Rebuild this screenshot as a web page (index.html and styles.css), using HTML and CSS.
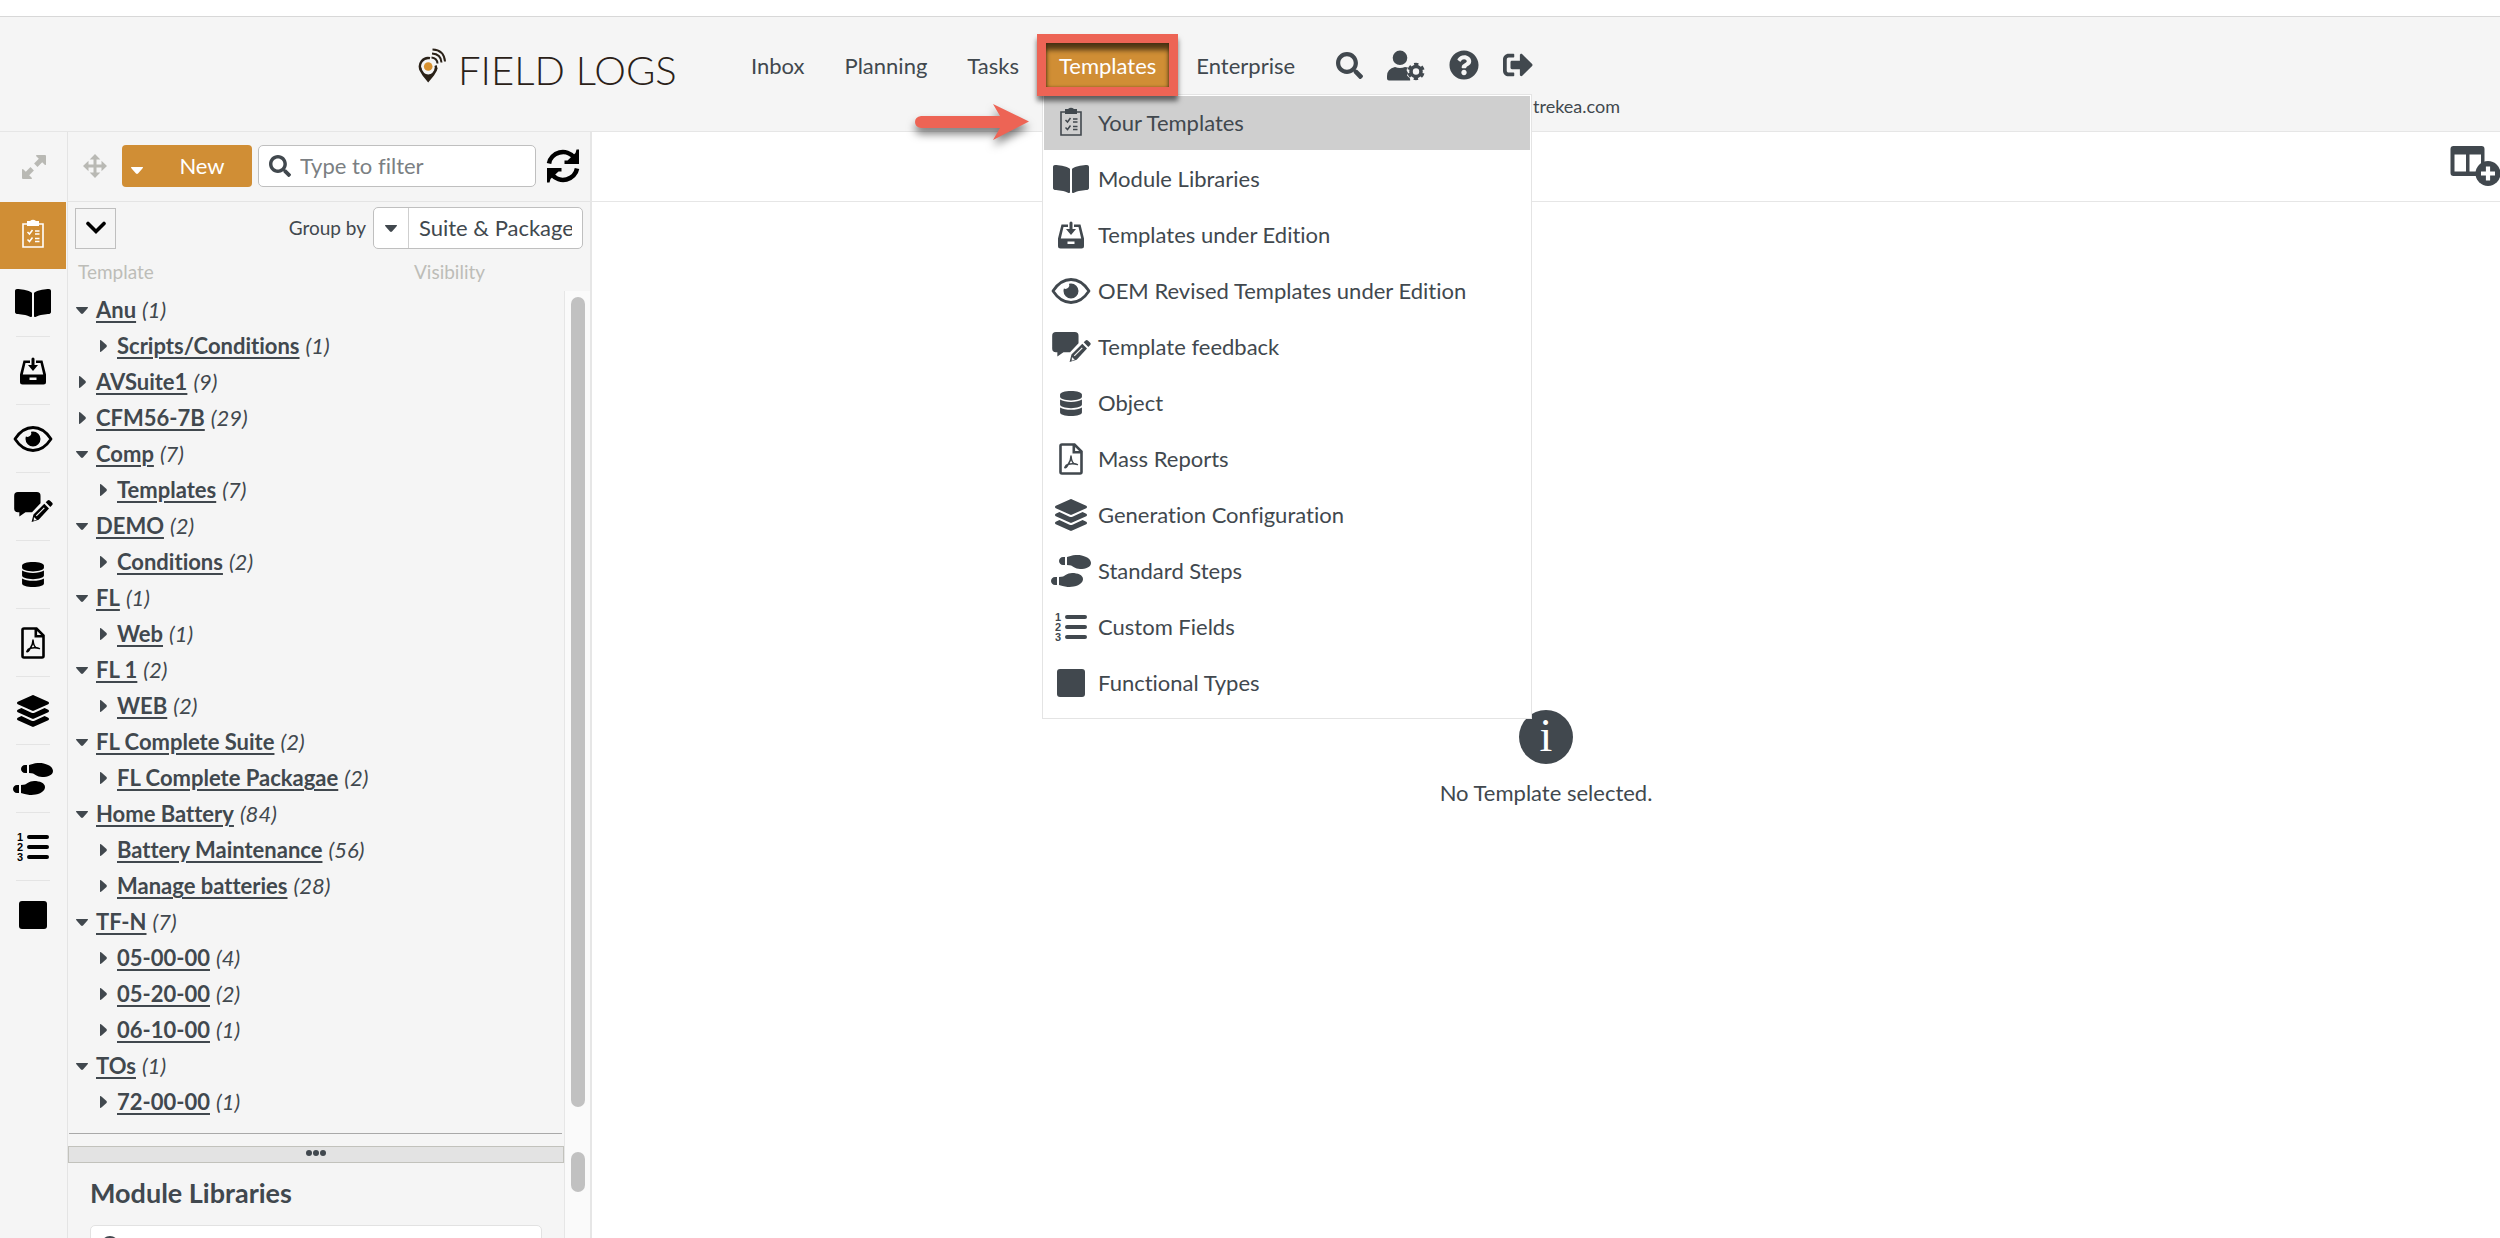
FILE: index.html
```html
<!DOCTYPE html>
<html lang="en">
<head>
<meta charset="utf-8">
<title>Field Logs - Templates</title>
<link rel="stylesheet" href="styles.css">
</head>
<body>
<svg class="sprite" aria-hidden="true">
  <symbol id="clipboard" viewBox="0 0 36 36"><path d="M8 7h20v23H8z" fill="none" stroke="currentColor" stroke-width="1.6"/><path d="M12 4h3q3-2.500 6 0h3v5H12z" fill="currentColor"/><path d="M12.500 15l2 2 3-4M12.500 22.500l2 2 3-4" fill="none" stroke="currentColor" stroke-width="1.500"/><path d="M20 14h4.500M20 17h4.500M20 21.500h4.500M20 24.500h4.500" stroke="currentColor" stroke-width="1.400"/></symbol>
  <symbol id="book" viewBox="0 0 576 512"><path fill="currentColor" d="M542.22 32.05c-54.8 3.11-163.72 14.43-230.96 55.59-4.64 2.84-7.27 7.89-7.27 13.17v363.87c0 11.55 12.63 18.85 23.28 13.49 69.18-34.82 169.23-44.32 218.7-46.92 16.89-.89 30.02-14.43 30.02-30.66V62.75c.01-17.71-15.35-31.74-33.77-30.7zM264.73 87.64C197.5 46.48 88.58 35.17 33.78 32.05 15.36 31.01 0 45.04 0 62.75V400.6c0 16.24 13.13 29.78 30.02 30.66 49.49 2.6 149.59 12.11 218.77 46.95 10.62 5.35 23.21-1.94 23.21-13.46V100.63c0-5.29-2.62-10.14-7.27-12.99z"/></symbol>
  <symbol id="tray" viewBox="0 0 36 36"><path fill="currentColor" fill-rule="evenodd" d="M8.500 7.500H15v2.500H10.500L7.800 21.500h20.400L25.500 10H21V7.500h6.500L31 21.500V29q0 2.500-2.500 2.500h-21Q5 31.500 5 29v-7.500zM14.500 24.500v2.500h7v-2.500z"/><path fill="currentColor" d="M16.500 6a1.500 1.500 0 0 1 3 0v6H23l-5 6-5-6h3.500z"/></symbol>
  <symbol id="eye" viewBox="0 0 40 30"><path d="M2 15Q9.500 3.500 20 3.500T38 15Q30.500 26.500 20 26.500T2 15z" fill="none" stroke="currentColor" stroke-width="2.800" stroke-linejoin="round"/><path fill="currentColor" d="M20 7.500a7.500 7.500 0 1 1-7.500 7.500q0-1.200.4-2.400 2.500 1 4.300-.8t.8-4q1-.3 2-.3z"/></symbol>
  <symbol id="feedback" viewBox="0 0 42 34"><path fill="currentColor" d="M5 1h20q4 0 4 4v8L20 22.500h-7L6.500 27v-4.500H5q-4 0-4-4V5q0-4 4-4zM34.500 12l2-2q1.200-1 2.400 0l2.500 2.500q1 1.200 0 2.400l-2 2zM33 13.500l5 5L27 30.500l-7.500 2.500 2-8z"/><path d="M33 18l-8.500 8.500" stroke="#f5f5f5" stroke-width="1.200"/><path fill="#f5f5f5" d="M22 27.500l3 3-3.300 1z"/></symbol>
  <symbol id="database" viewBox="0 0 448 512"><path fill="currentColor" d="M448 73.143v45.714C448 159.143 347.667 192 224 192S0 159.143 0 118.857V73.143C0 32.857 100.333 0 224 0s224 32.857 224 73.143zM448 176v102.857C448 319.143 347.667 352 224 352S0 319.143 0 278.857V176c48.125 33.143 136.208 48.572 224 48.572S399.874 209.143 448 176zm0 160v102.857C448 479.143 347.667 512 224 512S0 479.143 0 438.857V336c48.125 33.143 136.208 48.572 224 48.572S399.874 369.143 448 336z"/></symbol>
  <symbol id="pdf" viewBox="0 0 24 32"><path d="M3 1.500h12.500L22.500 8.500V29q0 1.500-1.500 1.500H3q-1.500 0-1.500-1.500V3Q1.500 1.500 3 1.500zM14.800 2v7.200H22" fill="none" stroke="currentColor" stroke-width="2.600"/><path d="M5.800 24.500q1-2.500 3.400-3.200 2.600-3 2.800-8.300.6 6 2.800 7.400 2 .3 3.600 1.200-4.200-1.300-9.200-.3-2 4-3.400 3.200z" fill="none" stroke="currentColor" stroke-width="1.500" stroke-linejoin="round"/></symbol>
  <symbol id="layers" viewBox="0 0 512 512"><path fill="currentColor" d="M12.41 148.02l232.94 105.67c6.8 3.09 14.49 3.09 21.29 0l232.94-105.67c16.55-7.51 16.55-32.52 0-40.03L266.65 2.31a25.607 25.607 0 0 0-21.29 0L12.41 107.98c-16.55 7.51-16.55 32.53 0 40.04zm487.18 88.28l-58.09-26.33-161.64 73.27c-7.56 3.43-15.59 5.17-23.86 5.17s-16.29-1.74-23.86-5.17L70.51 209.97l-58.1 26.33c-16.55 7.5-16.55 32.5 0 40l232.94 105.59c6.8 3.08 14.49 3.08 21.29 0L499.59 276.3c16.55-7.5 16.55-32.5 0-40zm0 127.8l-57.87-26.23-161.86 73.37c-7.56 3.43-15.59 5.17-23.86 5.17s-16.29-1.74-23.86-5.17L70.29 337.87 12.41 364.1c-16.55 7.5-16.55 32.5 0 40l232.94 105.59c6.8 3.08 14.49 3.08 21.29 0L499.59 404.1c16.55-7.5 16.55-32.5 0-40z"/></symbol>
  <symbol id="shoes" viewBox="0 0 640 512"><path fill="currentColor" d="M192 160h32V32h-32c-35.35 0-64 28.65-64 64s28.65 64 64 64zM0 416c0 35.35 28.65 64 64 64h32V352H64c-35.35 0-64 28.65-64 64zm337.46-128c-34.91 0-76.16 13.12-104.73 32-24.79 16.38-44.52 32-104.73 32v128l57.53 15.97c26.21 7.28 53.01 13.12 80.31 15.05 32.69 2.31 65.6.67 97.58-6.2C472.9 481.3 512 429.22 512 384c0-64-84.18-96-174.54-96zM491.42 7.25C459.44.38 426.53-1.26 393.84 1.05c-27.3 1.930-54.1 7.770-80.31 15.040L256 32v128c60.2 0 79.94 15.620 104.73 32 28.57 18.880 69.82 32 104.73 32C555.82 224 640 192 640 128c0-45.220-39.1-97.300-148.58-120.750z"/></symbol>
  <symbol id="square" viewBox="0 0 28 28"><rect width="28" height="28" rx="3" fill="currentColor"/></symbol>
  <symbol id="search" viewBox="0 0 512 512"><path fill="currentColor" d="M505 442.7L405.3 343c-4.5-4.5-10.6-7-17-7H372c27.6-35.3 44-79.7 44-128C416 93.1 322.9 0 208 0S0 93.1 0 208s93.1 208 208 208c48.3 0 92.7-16.4 128-44v16.3c0 6.4 2.5 12.5 7 17l99.7 99.7c9.4 9.4 24.6 9.4 33.9 0l28.3-28.3c9.4-9.4 9.4-24.6.1-34zM208 336c-70.7 0-128-57.2-128-128 0-70.7 57.2-128 128-128 70.7 0 128 57.2 128 128 0 70.7-57.2 128-128 128z"/></symbol>
  <symbol id="user-cog" viewBox="0 0 38 31"><path fill="currentColor" d="M13 .5a7.300 7.300 0 1 1 0 14.600 7.300 7.300 0 0 1 0-14.600zM8 17q5 2 10 0l3 .5-1.500 2.500 1.500 3-1 2.500 3 3 .2 2H2Q0 30.500 0 28.500V26q0-7 8-9z"/><circle cx="29" cy="21.500" r="5" fill="none" stroke="currentColor" stroke-width="3.600"/><circle cx="29" cy="21.500" r="7.400" fill="none" stroke="currentColor" stroke-width="2.600" stroke-dasharray="4.200 3.550" stroke-dashoffset="2.100" transform="rotate(-30 29 21.500)"/></symbol>
  <symbol id="help" viewBox="0 0 512 512"><path fill="currentColor" d="M504 256c0 136.997-111.043 248-248 248S8 392.997 8 256C8 119.083 119.043 8 256 8s248 111.083 248 248zM262.655 90c-54.497 0-89.255 22.957-116.549 63.758-3.536 5.286-2.353 12.415 2.715 16.258l34.699 26.31c5.205 3.947 12.621 3.008 16.665-2.122 17.864-22.658 30.113-35.797 57.303-35.797 20.429 0 45.698 13.148 45.698 32.958 0 14.976-12.363 22.667-32.534 33.976C247.128 238.528 216 254.941 216 296v4c0 6.627 5.373 12 12 12h56c6.627 0 12-5.373 12-12v-1.333c0-28.462 83.186-29.647 83.186-106.667 0-58.002-60.165-102-116.531-102zM256 338c-25.365 0-46 20.635-46 46 0 25.364 20.635 46 46 46s46-20.636 46-46c0-25.365-20.635-46-46-46z"/></symbol>
  <symbol id="sign-out" viewBox="0 0 512 512"><path fill="currentColor" d="M497 273L329 441c-15 15-41 4.500-41-17v-96H152c-13.300 0-24-10.700-24-24v-96c0-13.300 10.700-24 24-24h136V88c0-21.400 25.900-32 41-17l168 168c9.300 9.400 9.300 24.600 0 34zM192 436v-40c0-6.600-5.400-12-12-12H96c-17.700 0-32-14.300-32-32V160c0-17.700 14.300-32 32-32h84c6.600 0 12-5.400 12-12V76c0-6.600-5.400-12-12-12H96c-53 0-96 43-96 96v192c0 53 43 96 96 96h84c6.600 0 12-5.400 12-12z"/></symbol>
  <symbol id="expand" viewBox="0 0 24 24"><path fill="currentColor" d="M14.500 0H23q1 0 1 1v8.500q-.5 1-1.500 0l-2.300-2.300-4.700 4.700-3.400-3.400 4.700-4.700-2.300-2.300q-1-1 0-1.500zM9.500 24H1q-1 0-1-1v-8.500q.5-1 1.500 0l2.300 2.300 4.700-4.700 3.400 3.400-4.700 4.700 2.300 2.300q1 1 0 1.500z"/></symbol>
  <symbol id="move" viewBox="0 0 24 24"><path d="M12 3v18M3 12h18" stroke="currentColor" stroke-width="3"/><path fill="currentColor" d="M12 0l5.300 5.500H6.700zM12 24l5.300-5.500H6.700zM0 12l5.500-5.300v10.600zM24 12l-5.500-5.300v10.600z"/></symbol>
  <symbol id="sync" viewBox="0 0 34 36"><path d="M3 15.500A14 13.500 0 0 1 28 9.500M31 20.500A14 13.500 0 0 1 6 26.500" fill="none" stroke="currentColor" stroke-width="4.600"/><path fill="currentColor" d="M33 1.500v14.500H18.500v-3.500h3L29.500 5l1-3.500zM1 34.500V20h14.500v3.500h-3L4.500 31l-1 3.500z"/></symbol>
  <symbol id="chevron" viewBox="0 0 20 14"><path d="M2 2.500l8 8 8-8" fill="none" stroke="currentColor" stroke-width="3.600" stroke-linecap="round"/></symbol>
  <symbol id="caret-down" viewBox="0 0 12 12"><path fill="currentColor" d="M0 3h12q0 1-1 2L7 9.600q-1 .8-2 0L1 5Q0 4 0 3z"/></symbol>
  <symbol id="caret-right" viewBox="0 0 12 12"><path fill="currentColor" d="M3 0q1 0 2 1l4.500 4q.8 1 0 2L5 11q-1 1-2 1z"/></symbol>
  <symbol id="columns-add" viewBox="0 0 50 40"><path fill="currentColor" fill-rule="evenodd" d="M3.500 0h28q3 0 3 3v24q0 3-3 3h-28q-3 0-3-3V3q0-3 3-3zM4.500 8.500v17H16v-17zM19.500 8.500v17H31v-17z"/><circle cx="38" cy="27.500" r="12.500" fill="currentColor"/><path d="M38 20.500v14M31 27.500h14" stroke="#fff" stroke-width="4.200"/></symbol>
</svg>

<header class="topbar">
  <a class="brand" href="#">
    <svg class="brand-mark" viewBox="0 0 28 35" aria-hidden="true"><path d="M12 10.200A8.300 8.300 0 0 0 2.800 22M17.500 17.500q1 2-.2 4.500" fill="none" stroke="#2a2118" stroke-width="2.400"/><path fill="#2a2118" d="M.8 20q.5 3 3.700 7.500L10.200 34.500 16 27.500q3.300-4.500 3.700-7.500l-2-1.500q-2.500 8-7.500 8T3 19z"/><circle cx="10.200" cy="18.500" r="4.300" fill="#d8912f"/><path d="M13.500 9.500q5.500.5 6 6M14 5.500q9 .5 9.500 9M14.500 1.500Q26 2 27 13.500" fill="none" stroke="#2a2118" stroke-width="2"/></svg>
    <span class="brand-name">FIELD LOGS</span>
  </a>
  <div class="topbar-main">
    <nav class="nav">
      <a class="nav-link" href="#">Inbox</a>
      <a class="nav-link" href="#">Planning</a>
      <a class="nav-link" href="#">Tasks</a>
      <div class="nav-item">
        <a class="nav-link active" href="#">Templates</a>
        <span class="callout-box"></span>
        <ul class="menu">
          <li><a class="menu-link selected" href="#"><svg class="i-clip"><use href="#clipboard"/></svg>Your Templates</a></li>
          <li><a class="menu-link" href="#"><svg class="i-wide"><use href="#book"/></svg>Module Libraries</a></li>
          <li><a class="menu-link" href="#"><svg class="i-clip"><use href="#tray"/></svg>Templates under Edition</a></li>
          <li><a class="menu-link" href="#"><svg class="i-eye"><use href="#eye"/></svg>OEM Revised Templates under Edition</a></li>
          <li><a class="menu-link" href="#"><svg class="i-eye"><use href="#feedback"/></svg>Template feedback</a></li>
          <li><a class="menu-link" href="#"><svg class="i-small"><use href="#database"/></svg>Object</a></li>
          <li><a class="menu-link" href="#"><svg class="i-norm"><use href="#pdf"/></svg>Mass Reports</a></li>
          <li><a class="menu-link" href="#"><svg class="i-norm"><use href="#layers"/></svg>Generation Configuration</a></li>
          <li><a class="menu-link" href="#"><svg class="i-eye"><use href="#shoes"/></svg>Standard Steps</a></li>
          <li><a class="menu-link" href="#"><svg class="i-norm i-numbers" viewBox="0 0 32 32"><path d="M12 6h18M12 16h18M12 26h18"/><text x="0" y="10">1</text><text x="0" y="20">2</text><text x="0" y="30">3</text></svg>Custom Fields</a></li>
          <li><a class="menu-link" href="#"><svg class="i-square"><use href="#square"/></svg>Functional Types</a></li>
        </ul>
        <svg class="callout-arrow" viewBox="0 0 114 36" aria-hidden="true"><path fill="#ed6455" d="M6 12h79L78 0l36 17.500L78 36l7-12H6q-6-1-6-6t6-6z"/></svg>
      </div>
      <a class="nav-link" href="#">Enterprise</a>
      <div class="nav-tools">
        <button class="tool" aria-label="Search"><svg class="t-search"><use href="#search"/></svg></button>
        <button class="tool" aria-label="User settings"><svg class="t-user"><use href="#user-cog"/></svg></button>
        <button class="tool" aria-label="Help"><svg class="t-round"><use href="#help"/></svg></button>
        <button class="tool" aria-label="Sign out"><svg class="t-round"><use href="#sign-out"/></svg></button>
      </div>
    </nav>
    <div class="account">trekea.com</div>
  </div>
</header>

<div class="workspace">
  <aside class="rail">
    <button class="rail-top" aria-label="Expand"><svg class="i-grey"><use href="#expand"/></svg></button>
    <a class="rail-link current" href="#" aria-label="Your Templates"><svg class="i-clip"><use href="#clipboard"/></svg></a>
    <a class="rail-link" href="#" aria-label="Module Libraries"><svg class="i-wide"><use href="#book"/></svg></a>
    <a class="rail-link" href="#" aria-label="Templates under Edition"><svg class="i-clip"><use href="#tray"/></svg></a>
    <a class="rail-link" href="#" aria-label="OEM Revised Templates"><svg class="i-eye"><use href="#eye"/></svg></a>
    <a class="rail-link" href="#" aria-label="Template feedback"><svg class="i-eye"><use href="#feedback"/></svg></a>
    <a class="rail-link" href="#" aria-label="Object"><svg class="i-small"><use href="#database"/></svg></a>
    <a class="rail-link" href="#" aria-label="Mass Reports"><svg class="i-norm"><use href="#pdf"/></svg></a>
    <a class="rail-link" href="#" aria-label="Generation Configuration"><svg class="i-norm"><use href="#layers"/></svg></a>
    <a class="rail-link" href="#" aria-label="Standard Steps"><svg class="i-eye"><use href="#shoes"/></svg></a>
    <a class="rail-link" href="#" aria-label="Custom Fields"><svg class="i-norm i-numbers" viewBox="0 0 32 32"><path d="M12 6h18M12 16h18M12 26h18"/><text x="0" y="10">1</text><text x="0" y="20">2</text><text x="0" y="30">3</text></svg></a>
    <a class="rail-link" href="#" aria-label="Functional Types"><svg class="i-square"><use href="#square"/></svg></a>
  </aside>

  <section class="panel">
    <div class="panel-toolbar">
      <svg class="i-grey"><use href="#move"/></svg>
      <button class="new-button"><svg class="caret"><use href="#caret-down"/></svg><span>New</span></button>
      <label class="filter"><svg class="filter-icon"><use href="#search"/></svg><input type="text" placeholder="Type to filter" aria-label="Type to filter"></label>
      <button class="refresh" aria-label="Refresh"><svg class="refresh-icon"><use href="#sync"/></svg></button>
    </div>
    <div class="group-row">
      <button class="collapse" aria-label="Collapse"><svg class="chevron"><use href="#chevron"/></svg></button>
      <label class="group-label" for="group">Group by</label>
      <div class="combo">
        <span class="combo-caret"><svg class="caret"><use href="#caret-down"/></svg></span>
        <select id="group"><option>Suite &amp; Package</option></select>
      </div>
    </div>
    <div class="columns"><span>Template</span><span>Visibility</span></div>

    <div class="panel-body">
      <div class="tree-area">
        <ul class="tree">
          <li><div class="node"><svg class="caret"><use href="#caret-down"/></svg><a href="#">Anu</a><i>(1)</i></div>
            <ul><li class="node"><svg class="caret"><use href="#caret-right"/></svg><a href="#">Scripts/Conditions</a><i>(1)</i></li></ul></li>
          <li class="node"><svg class="caret"><use href="#caret-right"/></svg><a href="#">AVSuite1</a><i>(9)</i></li>
          <li class="node"><svg class="caret"><use href="#caret-right"/></svg><a href="#">CFM56-7B</a><i>(29)</i></li>
          <li><div class="node"><svg class="caret"><use href="#caret-down"/></svg><a href="#">Comp</a><i>(7)</i></div>
            <ul><li class="node"><svg class="caret"><use href="#caret-right"/></svg><a href="#">Templates</a><i>(7)</i></li></ul></li>
          <li><div class="node"><svg class="caret"><use href="#caret-down"/></svg><a href="#">DEMO</a><i>(2)</i></div>
            <ul><li class="node"><svg class="caret"><use href="#caret-right"/></svg><a href="#">Conditions</a><i>(2)</i></li></ul></li>
          <li><div class="node"><svg class="caret"><use href="#caret-down"/></svg><a href="#">FL</a><i>(1)</i></div>
            <ul><li class="node"><svg class="caret"><use href="#caret-right"/></svg><a href="#">Web</a><i>(1)</i></li></ul></li>
          <li><div class="node"><svg class="caret"><use href="#caret-down"/></svg><a href="#">FL 1</a><i>(2)</i></div>
            <ul><li class="node"><svg class="caret"><use href="#caret-right"/></svg><a href="#">WEB</a><i>(2)</i></li></ul></li>
          <li><div class="node"><svg class="caret"><use href="#caret-down"/></svg><a href="#">FL Complete Suite</a><i>(2)</i></div>
            <ul><li class="node"><svg class="caret"><use href="#caret-right"/></svg><a href="#">FL Complete Packagae</a><i>(2)</i></li></ul></li>
          <li><div class="node"><svg class="caret"><use href="#caret-down"/></svg><a href="#">Home Battery</a><i>(84)</i></div>
            <ul><li class="node"><svg class="caret"><use href="#caret-right"/></svg><a href="#">Battery Maintenance</a><i>(56)</i></li>
              <li class="node"><svg class="caret"><use href="#caret-right"/></svg><a href="#">Manage batteries</a><i>(28)</i></li></ul></li>
          <li><div class="node"><svg class="caret"><use href="#caret-down"/></svg><a href="#">TF-N</a><i>(7)</i></div>
            <ul><li class="node"><svg class="caret"><use href="#caret-right"/></svg><a href="#">05-00-00</a><i>(4)</i></li>
              <li class="node"><svg class="caret"><use href="#caret-right"/></svg><a href="#">05-20-00</a><i>(2)</i></li>
              <li class="node"><svg class="caret"><use href="#caret-right"/></svg><a href="#">06-10-00</a><i>(1)</i></li></ul></li>
          <li><div class="node"><svg class="caret"><use href="#caret-down"/></svg><a href="#">TOs</a><i>(1)</i></div>
            <ul><li class="node"><svg class="caret"><use href="#caret-right"/></svg><a href="#">72-00-00</a><i>(1)</i></li></ul></li>
        </ul>
        <hr class="tree-end">
      </div>
      <div class="track"><div class="thumb thumb-tree"></div></div>
      <div class="lower">
        <div class="resizer"><b></b><b></b><b></b></div>
        <h2>Module Libraries</h2>
        <label class="library-filter"><svg class="filter-icon"><use href="#search"/></svg><input type="text" aria-label="Filter libraries"></label>
      </div>
      <div class="track"><div class="thumb thumb-lower"></div></div>
    </div>
  </section>

  <main class="content">
    <div class="content-toolbar"><button class="tool" aria-label="Add column"><svg class="t-columns"><use href="#columns-add"/></svg></button></div>
    <div class="empty"><span class="info">i</span><p>No Template selected.</p></div>
  </main>
</div>
</body>
</html>
```
FILE: styles.css
```css
* { box-sizing: border-box; }

body {
  margin: 0;
  height: 100vh;
  padding-top: 16px;
  display: flex;
  flex-direction: column;
  overflow: hidden;
  background: #fff;
  color: #41484e;
  font: 22px/28px "Lato", "Open Sans", sans-serif;
  font-variant-ligatures: none;
}

a { color: inherit; text-decoration: none; }
button, input, select { font: inherit; color: inherit; }
button { border: 0; padding: 0; background: none; }
ul { list-style: none; margin: 0; padding: 0; }
svg { display: block; flex: none; }
.sprite { position: absolute; width: 0; height: 0; }

/* Header */
.topbar {
  flex: none;
  display: flex;
  align-items: flex-start;
  min-height: 116px;
  padding: 26px 0 0 418px;
  background: #f5f5f5;
  border-top: 1px solid #d8d8d8;
  border-bottom: 1px solid #e6e6e6;
}
.brand { display: flex; gap: 12px; width: 320px; padding-top: 5px; }
.brand-mark { width: 28px; height: 35px; }
.brand-name {
  color: #2a2118;
  font: 300 40px/44px "Lato", sans-serif;
  white-space: nowrap;
}
.topbar-main { width: 882px; }
.nav { display: flex; gap: 14px; }
.nav-item { position: relative; z-index: 2; }
.nav-link {
  display: block;
  height: 44px;
  padding: 0 13px;
  line-height: 46px;
}
.nav-link.active { background: #d08e35; color: #fff; }
.nav-tools { display: flex; align-items: center; gap: 24px; margin-left: 14px; }
.account { margin-top: 7px; font-size: 18px; line-height: 24px; text-align: right; }

.t-search { width: 27px; height: 27px; }
.t-user { width: 38px; height: 31px; }
.t-round { width: 30px; height: 30px; }
.t-columns { width: 50px; height: 40px; }

.callout-box {
  position: absolute;
  inset: -9px;
  z-index: 2;
  border: 9px solid #ed6455;
  box-shadow: 0 5px 5px rgba(0, 0, 0, .55), inset 0 7px 5px rgba(0, 0, 0, .6), inset 0 0 3px rgba(0, 0, 0, .4);
}
.callout-arrow {
  position: absolute;
  z-index: 2;
  top: 61px;
  right: 100%;
  width: 114px;
  height: 36px;
  margin-right: 17px;
  overflow: visible;
  filter: drop-shadow(0 6px 4px rgba(0, 0, 0, .5));
}

/* Templates menu */
.menu {
  position: absolute;
  top: 51px;
  left: -4px;
  width: 490px;
  padding: 1px 1px 6px;
  background: #fff;
  border: 1px solid #e4e4e4;
}
.menu-link {
  display: grid;
  grid-template-columns: 54px 1fr;
  align-items: center;
  height: 56px;
  border-bottom: 2px solid #fff;
}
.menu-link svg { justify-self: center; }
.menu-link.selected { background: #cfcfcf; }

.i-clip { width: 36px; height: 36px; }
.i-wide { width: 36px; height: 32px; }
.i-eye { width: 40px; height: 32px; }
.i-norm { width: 32px; height: 32px; }
.i-small { width: 22px; height: 25px; }
.i-square { width: 28px; height: 28px; }
.i-grey { width: 24px; height: 24px; color: #b9b9b4; }
.i-numbers path { stroke: currentColor; stroke-width: 4; stroke-linecap: round; }
.i-numbers text { fill: currentColor; font: 700 11px "Liberation Sans", sans-serif; }

/* Workspace */
.workspace {
  flex: 1;
  min-height: 0;
  display: grid;
  grid-template-columns: 68px 524px 1fr;
}
.rail { background: #f5f5f5; border-right: 1px solid #e4e4e4; color: #000; }
.rail-top { display: grid; place-items: center; width: 100%; height: 70px; }
.rail-link {
  display: grid;
  place-items: center;
  width: 66px;
  height: 68px;
  padding-bottom: 1px;
  background: linear-gradient(#e4e4e4, #e4e4e4) center bottom / 34px 1px no-repeat;
}
.rail-link.current { height: 67px; background: #d08e35; color: #fff; }
.rail-link:last-child { background: none; }

/* Side panel */
.panel {
  display: flex;
  flex-direction: column;
  min-height: 0;
  background: #f5f5f5;
  border-right: 2px solid #e6e6e6;
}
.panel-toolbar {
  flex: none;
  display: flex;
  align-items: center;
  height: 70px;
  padding: 0 10px 2px 15px;
  border-bottom: 1px solid #e4e4e4;
}
.new-button {
  display: grid;
  grid-template-columns: 30px 1fr;
  align-items: center;
  width: 130px;
  height: 42px;
  margin: 0 6px 0 15px;
  border-radius: 4px;
  background: #d08e35;
  color: #fff;
}
.new-button .caret { justify-self: center; margin-top: 8px; }
.caret { width: 12px; height: 12px; }
.filter {
  display: flex;
  align-items: center;
  flex: 1;
  min-width: 0;
  height: 42px;
  padding-left: 10px;
  gap: 9px;
  background: #fff;
  border: 1px solid #bfbfbf;
  border-radius: 5px;
}
.filter input, .library-filter input {
  flex: 1;
  min-width: 0;
  border: 0;
  padding: 0;
  background: none;
  outline: 0;
}
.filter input::placeholder { color: #7b7f83; }
.filter-icon { width: 22px; height: 22px; }
.refresh { margin-left: 10px; color: #000; }
.refresh-icon { width: 34px; height: 36px; }

.group-row {
  flex: none;
  display: flex;
  align-items: center;
  padding: 5px 7px 0;
}
.collapse {
  display: grid;
  place-items: center;
  width: 41px;
  height: 41px;
  border: 1px solid #bfbfbf;
  color: #000;
}
.chevron { width: 20px; height: 14px; }
.group-label { margin-left: auto; margin-right: 7px; font-size: 19px; }
.combo {
  display: flex;
  width: 210px;
  height: 42px;
  background: #fff;
  border: 1px solid #bfbfbf;
  border-radius: 5px;
}
.combo-caret {
  display: grid;
  place-items: center;
  width: 35px;
  border-right: 1px solid #cfcfcf;
}
.combo select {
  appearance: none;
  flex: 1;
  min-width: 0;
  margin: 0 10px;
  border: 0;
  padding: 0;
  background: none;
}
.columns {
  flex: none;
  display: grid;
  grid-template-columns: 336px 1fr;
  padding: 9px 10px 5px;
  color: #bdbdb8;
  font-size: 19px;
}

.panel-body {
  flex: 1;
  min-height: 0;
  display: grid;
  grid-template-columns: 1fr 26px;
  grid-template-rows: auto 1fr;
}
.tree { padding: 1px 0 0 8px; }
.tree ul { padding-left: 21px; }
.tree .node { display: flex; align-items: center; height: 36px; }
.node .caret { margin-right: 8px; }
.node a {
  font-weight: 700;
  text-decoration: underline;
  text-decoration-thickness: 2px;
  text-underline-offset: 3px;
  margin-right: 6px;
}
.tree-end { margin: 13px 2px 12px 1px; border: 0; border-top: 1px solid #a9a9a9; }
.track { background: #fafafa; border-left: 1px solid #e6e6e6; display: flex; }
.thumb { width: 14px; margin-left: 6px; border-radius: 7px; background: #c1c1c1; }
.thumb-tree { margin-top: 6px; margin-bottom: 39px; }
.thumb-lower { margin-top: 6px; height: 40px; }

.lower { min-height: 0; overflow: hidden; }
.resizer {
  display: flex;
  justify-content: center;
  gap: 1px;
  height: 17px;
  padding-top: 3px;
  background: #e3e3e3;
  border: 1px solid #c2c2bc;
}
.resizer b { width: 6px; height: 6px; border-radius: 50%; background: #41484e; }
.lower h2 { margin: 14px 22px 16px; font-size: 27px; line-height: 32px; }
.library-filter {
  display: flex;
  gap: 10px;
  height: 42px;
  margin: 0 22px;
  padding: 10px;
  background: #fff;
  border: 1px solid #e2e2e2;
  border-radius: 5px;
}

/* Main area */
.content { display: flex; flex-direction: column; min-width: 0; }
.content-toolbar {
  flex: none;
  display: flex;
  justify-content: flex-end;
  align-items: center;
  height: 70px;
  padding-bottom: 1px;
  border-bottom: 1px solid #e6e6e6;
}
.empty {
  flex: 1;
  display: flex;
  flex-direction: column;
  align-items: center;
  justify-content: center;
  padding-bottom: 100px;
  padding-top: 176px;
}
.info {
  width: 54px;
  height: 54px;
  border-radius: 50%;
  background: #41484e;
  color: #fff;
  font: 46px/52px "Liberation Serif", serif;
  text-align: center;
}
.empty p { margin: 15px 0 0; }
```
